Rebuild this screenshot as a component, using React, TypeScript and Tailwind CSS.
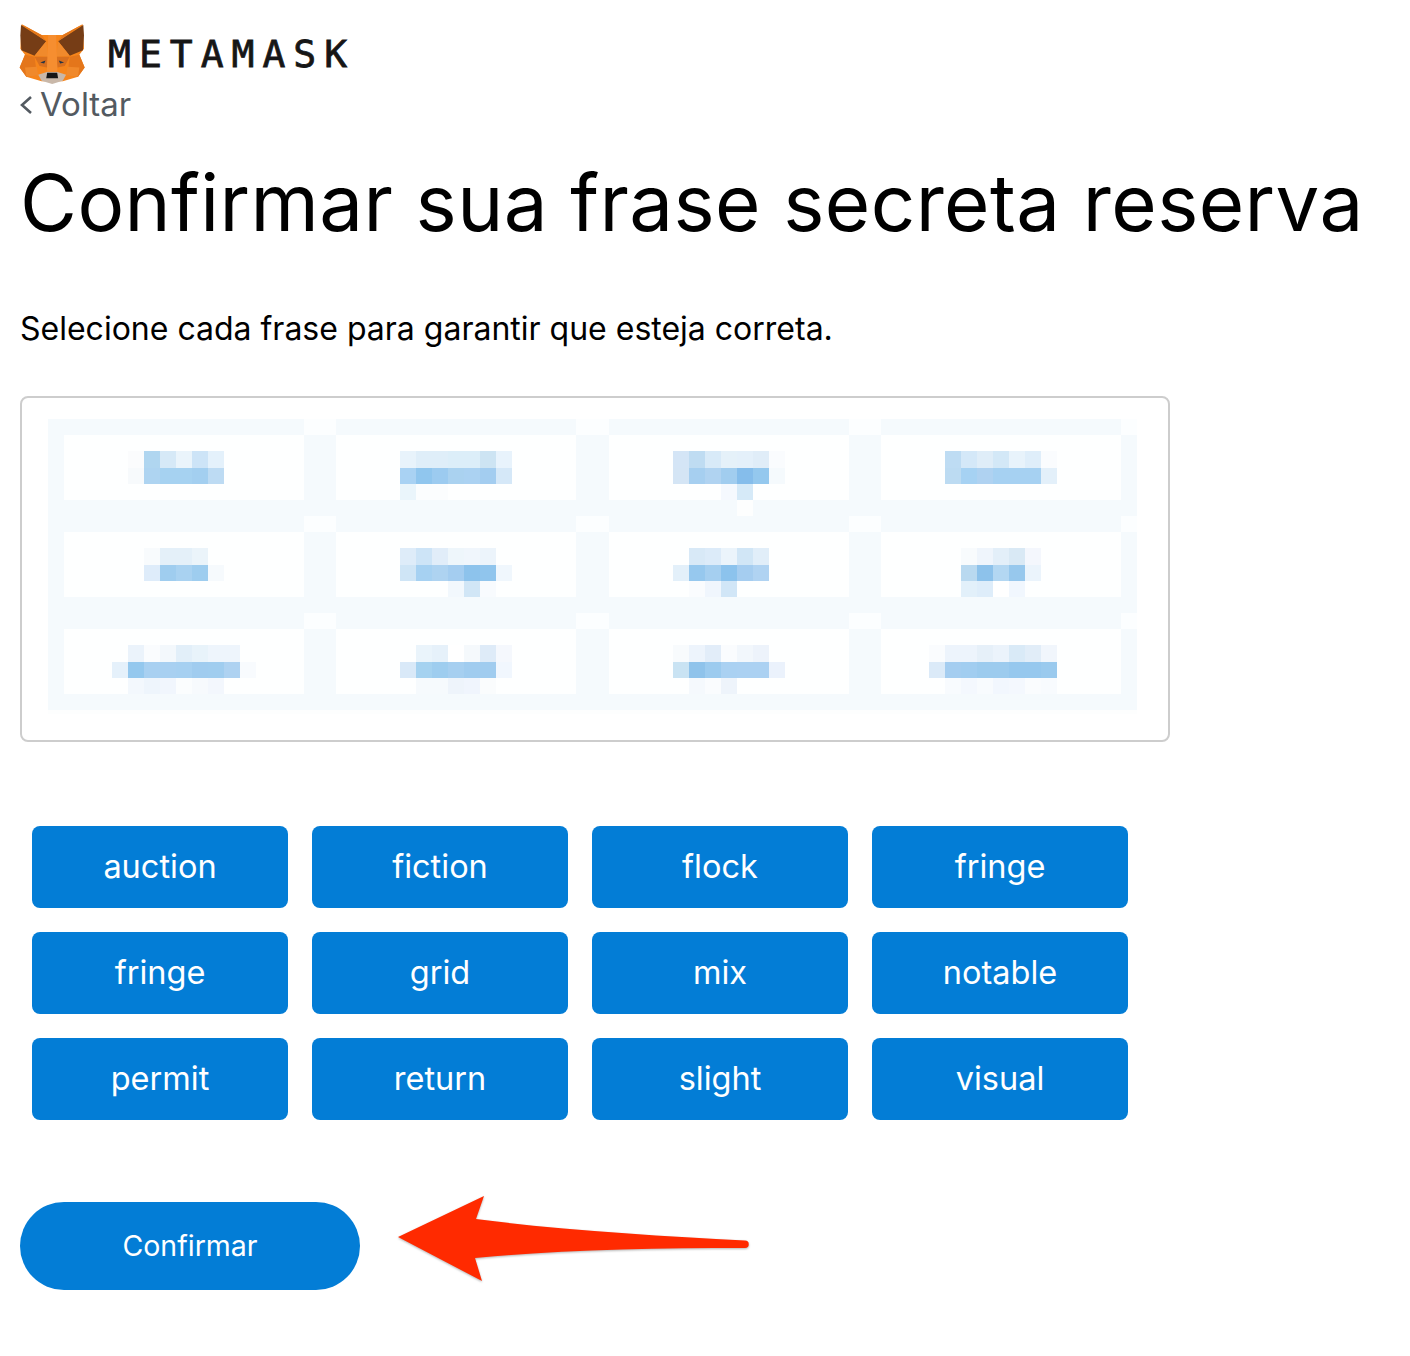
const WORDS = ["auction", "fiction", "flock", "fringe", "fringe", "grid", "mix", "notable", "permit", "return", "slight", "visual"]

// [row, first column, colours] for the pixelated words in the blurred panel
const MOSAIC: [number, number, string[]][] = [
  [2, 5, ["fbfcfd", "b0d6f0", "d6e9f7", "eaf4fb", "cde4f7", "e4f1fb"]],
  [3, 5, ["f7fafc", "aed4f1", "a6d2f1", "a6d2f1", "a3cff0", "bddbf3"]],
  [2, 22, ["e8f3fb", "dfeef9", "dfeef9", "dceef9", "dceef9", "cde4f3", "e8f3fc"]],
  [3, 22, ["a9d2f3", "90c6ee", "9ccbf0", "aad2f0", "abd2f2", "a3cdf0", "d5e8f8"]],
  [4, 22, ["eaf5fb", "fbfdfe", "fbfdfe"]],
  [2, 39, ["d4e5f6", "bfdcf2", "d8eaf8", "e5f1f9", "e4f0fa", "e0edf8", "fafcfe"]],
  [3, 39, ["d4e5f5", "a6cff0", "b0d3f1", "a1cdef", "85bdeb", "94c8ee", "f5fafd"]],
  [4, 42, ["f5f9fe", "d6eaf8"]],
  [5, 43, ["fdfefe"]],
  [2, 56, ["bedcf3", "d4e8f8", "dfedf8", "d3e8f7", "e8f3fb", "dfeefa", "fafcfe"]],
  [3, 56, ["bcdbf2", "a6d2f3", "afd2f1", "a6d1f2", "a6d1f2", "a6d1f2", "e3f0fa"]],
  [8, 6, ["f8fbfd", "e4f0f9", "e4f0f9", "ebf4fa"]],
  [9, 6, ["deecfa", "9fcdef", "a9d2f1", "9ecdef", "f6fafd"]],
  [8, 22, ["deecf9", "cde4f7", "e1edf9", "eef6fb", "f0f6fc", "ecf4fb"]],
  [9, 22, ["cfe5f6", "a6d1f2", "aed3f1", "a4cdf0", "8dc3ec", "90c5ed", "f0f7fd"]],
  [10, 25, ["f2f8fd", "d1e6f6", "f8fbfe"]],
  [8, 40, ["d8e9f7", "dcebf9", "ebf4fb", "d1e6f6", "e1eef9"]],
  [9, 39, ["e3f0fa", "96c8ee", "a5cff0", "8cc3ed", "a5cdf0", "b0d3f2"]],
  [10, 40, ["fafcfe", "f0f6fd", "d1e6f7"]],
  [8, 57, ["f8fbfd", "eff5fc", "e3eff9", "d9e9f5", "f4f7fd"]],
  [9, 57, ["b9d9f0", "8dc2eb", "b3d7f2", "97c8ed", "ebf4fc"]],
  [10, 57, ["e2f0fa", "deedfa", "ffffff", "f1f7fe"]],
  [14, 5, ["ebf3fb", "fafcfe", "f3f8fc", "e2eff9", "e8f3fa", "eef5fc", "eef5fc"]],
  [15, 4, ["e5f1fb", "94c8ee", "a8d0f1", "a8d0f1", "a6d0f1", "a0ccef", "a0cdef", "aed2f1", "f8fbfe"]],
  [16, 5, ["f3f8fd", "eef5fc", "f1f6fd", "fbfdfe", "f7fafd", "f3f7fd"]],
  [14, 23, ["eaf4fb", "e6f1fa", "ffffff", "f5f9fc", "deebf8", "f5f8fd"]],
  [15, 22, ["d9e9f8", "a5d2f0", "9ecdef", "a6cff0", "a0ccef", "a0ccef", "f1f7fe"]],
  [16, 23, ["f6fafd", "f6fafd", "eef4fb", "f0f5fd", "fafcfd"]],
  [14, 39, ["f8fbfd", "edf4fc", "e2edf9", "fafcfe", "f2f7fc", "edf3fb"]],
  [15, 39, ["c9e3f3", "8fc3eb", "9ccbef", "aad1f2", "abd1f2", "abd1f2", "ebf2fc"]],
  [16, 40, ["f5f9fd", "fafcfe", "eef4fb"]],
  [14, 55, ["fafcfe", "edf4fc", "edf4fc", "e6f0f9", "ebf3fb", "d9eaf7", "e1edf8", "f1f6fc"]],
  [15, 55, ["dbeaf8", "a4cdf0", "a1cdf0", "9ccbee", "9ccbee", "96c8ee", "96c8ee", "9acaee"]],
  [16, 56, ["f8fbfe", "f4f8fe", "f8fbfe", "f2f7fe", "f4f8fe", "fafcfe", "f8fbfe"]],
]

const CELL_COLS = [1, 18, 35, 52]
const CELL_ROWS = [1, 7, 13]

function BlurredWords() {
  return (
    // rows in the screenshot are a touch taller than wide, hence the stretched viewBox
    <svg width="1146" height="316" viewBox="-26 -20.8 1145 312.7" preserveAspectRatio="none" shapeRendering="crispEdges" className="block">
      <rect x="0" y="0" width="1088" height="288" fill="#f5fafd" />
      <rect x="0" y="288" width="1088" height="16" fill="#fdfefe" />
      {[0, 96, 192].map((y) =>
        [256, 528, 800].map((x) => <rect key={`${x}-${y}`} x={x} y={y} width="32" height="16" fill="#fcfeff" />),
      )}
      {[0, 96, 192].map((y) => (
        <rect key={y} x="1072" y={y} width="16" height="16" fill="#fcfeff" />
      ))}
      {CELL_ROWS.map((r) =>
        CELL_COLS.map((c) => (
          <rect key={`${r}-${c}`} x={c * 16} y={r * 16} width="240" height="64" fill="#feffff" />
        )),
      )}
      {MOSAIC.map(([row, col, colours]) =>
        colours.map((colour, i) => (
          <rect key={`${row}-${col}-${i}`} x={(col + i) * 16} y={row * 16} width="16" height="16" fill={`#${colour}`} />
        )),
      )}
    </svg>
  )
}

function FoxLogo() {
  return (
    <svg width="68" height="63" viewBox="55 35 205 190" className="shrink-0">
      <polygon points="66,42 126,74 190,74 250,42 254,116 240,134 256,172 236,200 190,214 126,214 80,200 60,172 76,134 62,116" fill="#f6851b" />
      <polygon points="64,44 140,93 105,137 65,120 62,76" fill="#763d16" />
      <polygon points="252,44 176,93 211,137 251,120 254,76" fill="#763d16" />
      <polygon points="66,42 126,74 140,93" fill="#e2761b" />
      <polygon points="250,42 190,74 176,93" fill="#e2761b" />
      <polygon points="105,137 140,93 146,140" fill="#f08a2c" />
      <polygon points="211,137 176,93 170,140" fill="#f08a2c" />
      <polygon points="105,140 146,140 142,172 120,168" fill="#d8701f" />
      <polygon points="211,140 170,140 174,172 196,168" fill="#d8701f" />
      <polygon points="146,74 170,74 174,186 142,186" fill="#f68e30" />
      <polygon points="60,172 76,134 105,140 112,196 80,200" fill="#e4761b" />
      <polygon points="256,172 240,134 211,140 204,196 236,200" fill="#e4761b" />
      <polygon points="76,172 112,170 116,196 80,200" fill="#f0892b" />
      <polygon points="240,172 204,170 200,196 236,200" fill="#f0892b" />
      <polygon points="116,194 142,186 174,186 200,194 190,212 158,222 126,212" fill="#c9b8a9" />
      <polygon points="143,188 173,188 176,205 140,205" fill="#161616" />
      <polygon points="122,157 138,151 134,160" fill="#233447" />
      <polygon points="194,157 178,151 182,160" fill="#233447" />
    </svg>
  )
}

function RedArrow() {
  return (
    <svg width="360" height="96" viewBox="392 1190 360 96" className="block drop-shadow-[0_1px_1px_rgba(0,0,0,0.3)]">
      <path
        d="M398 1237 L484 1196 L476 1219 C560 1230 660 1236 745 1240.5 A3.7 3.7 0 0 1 745 1248 C650 1248 560 1250 475 1258 L482 1281 Z"
        fill="#ff2a00"
      />
    </svg>
  )
}

export default function App() {
  return (
    <div className="w-[1410px] h-[1356px] bg-white px-5 font-['Inter',sans-serif] text-black">
      <div className="flex items-center pt-[22px] h-[85px] -ml-[2px]">
        <FoxLogo />
        <span className="ml-[22px] font-['DejaVu_Sans_Mono',monospace] [-webkit-text-stroke:0.8px_#161616] text-[38px] tracking-[8px] leading-none text-[#161616]">METAMASK</span>
      </div>

      <div className="flex items-center gap-[8px] h-[40px] text-[33px] text-[#535a61]">
        <svg width="12" height="20" viewBox="0 0 12 20" fill="none" stroke="#535a61" strokeWidth="2.6">
          <path d="M11 2 L2 10 L11 18" />
        </svg>
        <span>Voltar</span>
      </div>

      <h1 className="mt-[28px] text-[78px] tracking-[0.4px] leading-[100px] font-normal whitespace-nowrap">Confirmar sua frase secreta reserva</h1>

      <p className="mt-[53px] text-[32px] leading-[46px]">Selecione cada frase para garantir que esteja correta.</p>

      <div className="mt-[44px] w-[1150px] h-[346px] border-2 border-[#cdcdcd] rounded-lg overflow-hidden">
        <BlurredWords />
      </div>

      <div className="mt-[84px] ml-3 grid grid-cols-[repeat(4,256px)] gap-6">
        {WORDS.map((word, i) => (
          <button key={i} className="h-[82px] rounded-lg bg-[#037dd6] text-white text-[32.5px]">
            {word}
          </button>
        ))}
      </div>

      <div className="mt-[70px] flex items-center">
        <button className="w-[340px] h-[88px] rounded-full bg-[#037dd6] text-white text-[28.5px]">Confirmar</button>
        <div className="ml-[32px] mb-4">
          <RedArrow />
        </div>
      </div>
    </div>
  )
}
